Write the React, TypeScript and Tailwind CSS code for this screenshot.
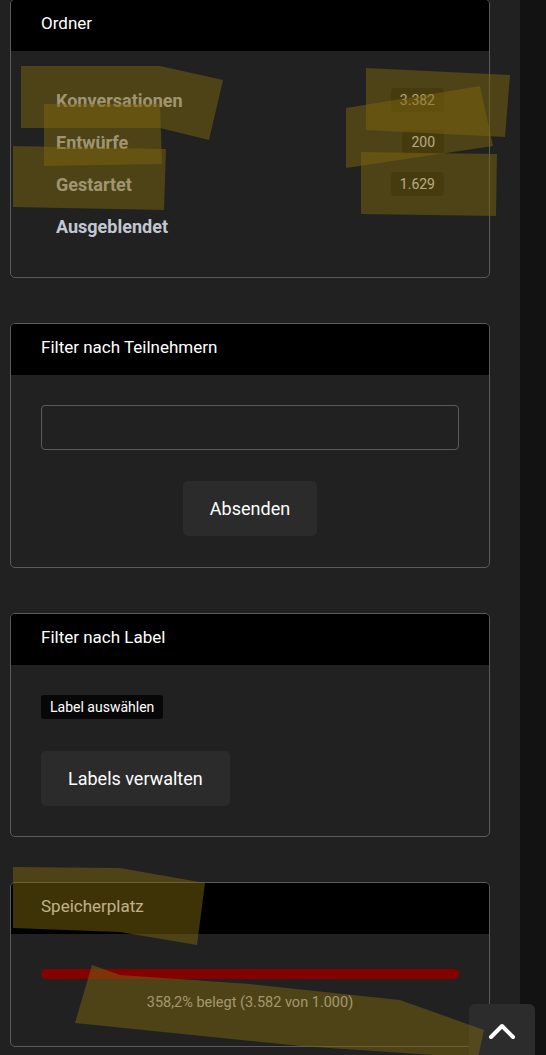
import React from 'react';

const folders = [
  { name: 'Konversationen', count: '3.382' },
  { name: 'Entwürfe', count: '200' },
  { name: 'Gestartet', count: '1.629' },
  { name: 'Ausgeblendet', count: null },
];

function Card({ title, children, className = '' }: { title: string; children: React.ReactNode; className?: string }) {
  return (
    <div className={`w-[480px] ml-[10px] rounded-[5px] border border-[#5a5a5a] bg-[#212121] overflow-hidden ${className}`}>
      <div className="h-[51px] bg-black px-[30px] pb-[3px] flex items-center text-[17px] text-white">{title}</div>
      {children}
    </div>
  );
}

// semi-transparent highlighter strokes lying over the page
const marks = [
  '21,66 160,66 223,80 209,140 160,128 21,128',
  '44,104 160,104 162,164 44,166',
  '13,146 166,149 164,210 13,207',
  '366,68 510,75 505,137 366,130',
  '346,108 480,86 493,146 346,168',
  '361,152 497,154 496,216 361,214',
  '13,867 120,868 205,883 197,945 120,932 13,928',
  '92,965 120,975 250,984 400,1000 484,1030 478,1058 300,1046 75,1023',
];

export default function App() {
  return (
    <div className="relative w-[546px] h-[1055px] overflow-hidden bg-[#212121] flex" style={{ fontFamily: 'Roboto, "Liberation Sans", sans-serif' }}>
      <div className="w-[520px] flex flex-col gap-[45px]">
        <Card title="Ordner" className="-mt-px">
          <ul className="pt-[28px] pb-[30px] px-[30px]">
            {folders.map((f) => (
              <li key={f.name} className="h-[42px] px-[15px] flex items-center justify-between">
                <span className="text-[18px] font-bold text-[#c2c8d1]">{f.name}</span>
                {f.count && (
                  <span className="h-[24px] px-[9px] flex items-center rounded-[4px] bg-[#111111] text-[14px] text-[#eeeeee]">
                    {f.count}
                  </span>
                )}
              </li>
            ))}
          </ul>
        </Card>

        <Card title="Filter nach Teilnehmern">
          <div className="pt-[30px] pb-[31px] px-[30px] flex flex-col items-center">
            <input className="w-full h-[45px] rounded-[4px] border border-[#5a5a5a] bg-[#212121] outline-none" />
            <button className="mt-[31px] h-[55px] px-[27px] rounded-[5px] bg-[#2b2b2b] text-[18px] text-white">Absenden</button>
          </div>
        </Card>

        <Card title="Filter nach Label">
          <div className="pt-[30px] pb-[30px] px-[30px] flex flex-col items-start">
            <span className="h-[24px] px-[9px] flex items-center rounded-[3px] bg-[#070707] text-[14px] text-white">Label auswählen</span>
            <button className="mt-[32px] h-[55px] px-[27px] rounded-[5px] bg-[#2b2b2b] text-[18px] text-white">Labels verwalten</button>
          </div>
        </Card>

        <Card title="Speicherplatz">
          <div className="pt-[35px] pb-[33px] px-[30px] flex flex-col items-center">
            <div className="w-full h-[10px] rounded-full bg-[#870000]" />
            <div className="mt-[14px] text-[14.5px] leading-[20px] text-[#cccccc]">358,2% belegt (3.582 von 1.000)</div>
          </div>
        </Card>
      </div>
      <div className="w-[26px] bg-[#121212]" />

      <button className="absolute left-[469px] top-[1004px] w-[66px] h-[64px] rounded-[6px] bg-[#2c2c2c] flex items-start justify-center pt-[18px]">
        <svg width="28" height="18" viewBox="0 0 28 18">
          <polyline points="3,15 14,4 25,15" fill="none" stroke="white" strokeWidth="4" strokeLinecap="round" strokeLinejoin="round" />
        </svg>
      </button>

      <svg className="absolute inset-0 pointer-events-none" width="546" height="1055">
        {marks.map((p, i) => (
          <polygon key={i} points={p} fill="rgba(124,100,14,0.5)" />
        ))}
      </svg>
    </div>
  );
}
